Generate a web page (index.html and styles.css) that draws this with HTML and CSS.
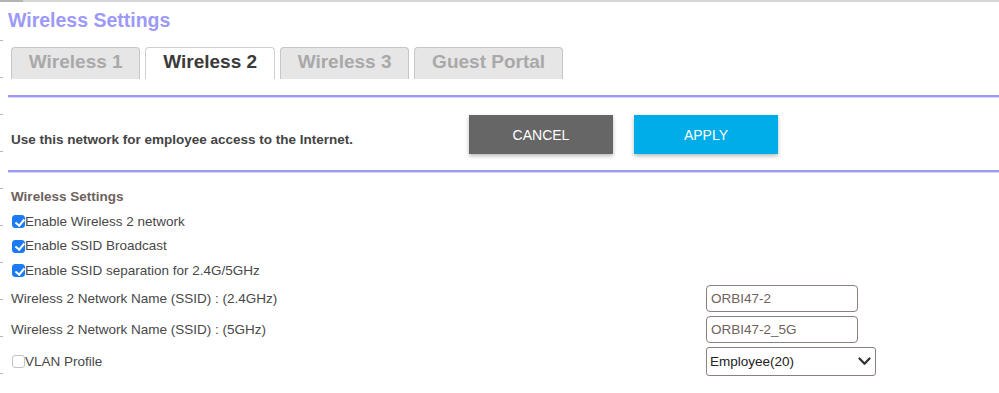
FILE: index.html
```html
<!DOCTYPE html>
<html>
<head>
<meta charset="utf-8">
<title>Wireless Settings</title>
<link rel="stylesheet" href="styles.css">
</head>
<body>
<div class="topbar"></div>
<div class="ticks"></div>
<div class="page">
  <h1 class="title">Wireless Settings</h1>
  <div class="tabs">
    <div class="tab">Wireless 1</div>
    <div class="tab active">Wireless 2</div>
    <div class="tab">Wireless 3</div>
    <div class="tab">Guest Portal</div>
  </div>
  <div class="rule"></div>
  <div class="actions">
    <div class="note">Use this network for employee access to the Internet.</div>
    <button class="btn cancel">CANCEL</button>
    <button class="btn apply">APPLY</button>
  </div>
  <div class="rule"></div>
  <div class="settings">
    <div class="heading">Wireless Settings</div>
    <label class="check"><input type="checkbox" checked>Enable Wireless 2 network</label>
    <label class="check"><input type="checkbox" checked>Enable SSID Broadcast</label>
    <label class="check"><input type="checkbox" checked>Enable SSID separation for 2.4G/5GHz</label>
    <div class="fields">
      <div class="label">Wireless 2 Network Name (SSID) : (2.4GHz)</div>
      <div><input class="text" type="text" value="ORBI47-2"></div>
      <div class="label">Wireless 2 Network Name (SSID) : (5GHz)</div>
      <div><input class="text" type="text" value="ORBI47-2_5G"></div>
      <label class="label check"><input type="checkbox">VLAN Profile</label>
      <div class="select-wrap">
        <select class="select"><option>Employee(20)</option></select>
        <svg class="chev" width="13" height="9" viewBox="0 0 13 9"><path d="M1.5 1.5 L6.5 6.7 L11.5 1.5" fill="none" stroke="#333" stroke-width="2.3" stroke-linecap="round" stroke-linejoin="round"/></svg>
      </div>
    </div>
  </div>
</div>
</body>
</html>
```

FILE: styles.css
```css
html, body {
  margin: 0;
  padding: 0;
  background: #fff;
}
body {
  font-family: "Liberation Sans", Arial, sans-serif;
  color: #444;
  position: relative;
  min-height: 393px;
  overflow: hidden;
}
.topbar {
  height: 2px;
  background: linear-gradient(to right, #b4b4b4 0 23px, #d6d6d6 23px);
}
.ticks {
  position: absolute;
  left: 0;
  top: 40px;
  width: 3px;
  height: 360px;
  background: repeating-linear-gradient(to bottom, #b8b8b8 0 1px, transparent 1px 37px);
}
.page {
  padding-left: 8px;
}
.title {
  margin: 7px 0 0 0;
  font-size: 19.5px;
  line-height: 22px;
  font-weight: bold;
  color: #9d99f7;
}
.tabs {
  display: flex;
  gap: 5px;
  margin-top: 16px;
  padding-left: 3px;
}
.tab {
  font-size: 19px;
  font-weight: bold;
  line-height: 28px;
  padding: 0 16.8px 3px;
  border: 1px solid #c6c6c6;
  border-bottom: none;
  border-radius: 4px 4px 0 0;
  background: #e6e6e6;
  color: #a9a9a9;
}
.tab.active {
  background: #fff;
  color: #3a3a3a;
  border-color: #cfcfcf;
}
.rule {
  height: 2px;
  background: #9c99f6;
  box-shadow: 0 1px 0 #d6d5fb;
}
.tabs + .rule {
  margin-top: 16px;
}
.actions {
  display: flex;
  align-items: center;
  padding: 18px 0 16px 3px;
}
.note {
  flex: 0 0 458px;
  font-size: 13.5px;
  font-weight: bold;
  line-height: 16px;
  color: #444;
  margin-top: 10px;
}
.btn {
  width: 144px;
  height: 39px;
  border: none;
  border-radius: 0;
  font-family: "Liberation Sans", Arial, sans-serif;
  font-size: 14px;
  color: #fff;
  box-shadow: 0 2px 4px rgba(0, 0, 0, 0.28);
  padding: 0;
}
.cancel {
  background: #666666;
  margin-right: 21px;
}
.apply {
  background: #00ade8;
}
.settings {
  padding: 13px 0 0 3px;
  font-size: 13.5px;
  line-height: 24.5px;
  color: #484848;
}
.heading {
  font-weight: bold;
  color: #6e625d;
}
.check {
  display: flex;
  align-items: center;
}
.check input {
  appearance: none;
  -webkit-appearance: none;
  width: 13px;
  height: 13px;
  margin: 0 0 0 1px;
  border-radius: 3px;
  border: 1px solid #c4c4c4;
  background: #fff;
  box-sizing: border-box;
  position: relative;
}
.check input:checked {
  background: #1b7bf3;
  border-color: #1b7bf3;
}
.check input:checked::after {
  content: "";
  position: absolute;
  left: 3.5px;
  top: 0.5px;
  width: 3.5px;
  height: 7px;
  border: solid #fff;
  border-width: 0 2px 2px 0;
  transform: rotate(40deg);
}
.fields {
  display: grid;
  grid-template-columns: 695px 1fr;
  row-gap: 4px;
  margin-top: 2px;
  align-items: center;
}
.label {
  line-height: 20px;
}
.text {
  box-sizing: border-box;
  width: 152px;
  height: 27px;
  border: 1px solid #8b817c;
  border-radius: 4px;
  padding: 0 4px;
  font-family: "Liberation Sans", Arial, sans-serif;
  font-size: 13.5px;
  color: #6e625d;
  display: block;
  outline: none;
}
.select-wrap {
  position: relative;
  width: 170px;
  height: 29px;
}
.select {
  appearance: none;
  -webkit-appearance: none;
  box-sizing: border-box;
  width: 170px;
  height: 29px;
  border: 1px solid #8b817c;
  border-radius: 3px;
  background: #fff;
  padding: 0 3px;
  font-family: "Liberation Sans", Arial, sans-serif;
  font-size: 13.5px;
  color: #222;
  display: block;
}
.chev {
  position: absolute;
  right: 5px;
  top: 10px;
  pointer-events: none;
}
```
